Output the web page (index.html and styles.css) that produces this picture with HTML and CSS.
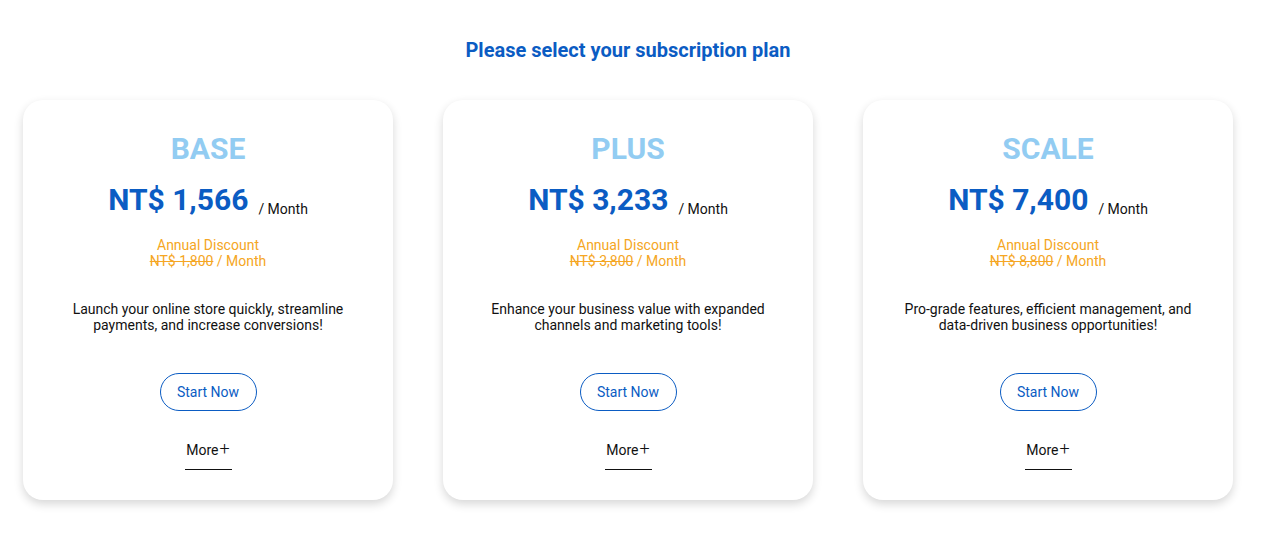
FILE: index.html
```html
<!DOCTYPE html>
<html lang="en">
<head>
<meta charset="utf-8">
<title>Subscription plans</title>
<link rel="stylesheet" href="styles.css">
</head>
<body>
<main class="page">
  <h1 class="heading">Please select your subscription plan</h1>
  <div class="plans">
    <section class="card">
      <h2 class="plan-name">BASE</h2>
      <div class="price"><span class="amount">NT$ 1,566</span><span class="per">/ Month</span></div>
      <div class="discount">
        <div>Annual Discount</div>
        <div><s>NT$ 1,800</s> / Month</div>
      </div>
      <p class="desc">Launch your online store quickly, streamline payments, and increase conversions!</p>
      <button class="start">Start Now</button>
      <a class="more">More<span class="plus">+</span></a>
    </section>
    <section class="card">
      <h2 class="plan-name">PLUS</h2>
      <div class="price"><span class="amount">NT$ 3,233</span><span class="per">/ Month</span></div>
      <div class="discount">
        <div>Annual Discount</div>
        <div><s>NT$ 3,800</s> / Month</div>
      </div>
      <p class="desc">Enhance your business value with expanded channels and marketing tools!</p>
      <button class="start">Start Now</button>
      <a class="more">More<span class="plus">+</span></a>
    </section>
    <section class="card">
      <h2 class="plan-name">SCALE</h2>
      <div class="price"><span class="amount">NT$ 7,400</span><span class="per">/ Month</span></div>
      <div class="discount">
        <div>Annual Discount</div>
        <div><s>NT$ 8,800</s> / Month</div>
      </div>
      <p class="desc">Pro-grade features, efficient management, and data-driven business opportunities!</p>
      <button class="start">Start Now</button>
      <a class="more">More<span class="plus">+</span></a>
    </section>
  </div>
</main>
</body>
</html>
```
FILE: styles.css
```css
* { box-sizing: border-box; }
html, body { margin: 0; padding: 0; background: #fff; }
body { font-family: Roboto, "Noto Sans", Arial, sans-serif; color: #111; }
.page { width: 1210px; margin-left: 23px; padding-top: 37px; padding-bottom: 40px; }
.heading {
  margin: 0;
  text-align: center;
  font-size: 20px;
  line-height: 26px;
  font-weight: 700;
  color: #0b5cc3;
}
.plans {
  display: flex;
  gap: 50px;
  margin-top: 37px;
}
.card {
  width: 370px;
  height: 400px;
  background: #fff;
  border-radius: 20px;
  box-shadow: 0 4px 10px rgba(0,0,0,0.16);
  display: flex;
  flex-direction: column;
  align-items: center;
  padding-top: 31px;
}
.plan-name {
  margin: 0;
  font-size: 30px;
  line-height: 36px;
  font-weight: 700;
  color: #92ccf2;
}
.price {
  margin-top: 14px;
  display: flex;
  align-items: baseline;
  gap: 10px;
}
.amount {
  font-size: 30px;
  line-height: 38px;
  font-weight: 700;
  color: #0b5cc3;
}
.per { font-size: 14px; color: #111; position: relative; top: 4px; }
.discount {
  margin-top: 18px;
  text-align: center;
  font-size: 14px;
  line-height: 16px;
  color: #f5a623;
}
.discount s { text-decoration-thickness: 1px; }
.desc {
  margin: 32px 0 0;
  width: 294px;
  text-align: center;
  font-size: 14px;
  line-height: 16px;
  color: #111;
}
.start {
  margin-top: 40px;
  width: 97px;
  height: 38px;
  border: 1px solid #0b5cc3;
  border-radius: 19px;
  background: #fff;
  color: #0b5cc3;
  font-family: inherit;
  font-size: 14px;
  padding: 0;
}
.more {
  margin-top: 29px;
  font-size: 14px;
  line-height: 18px;
  color: #111;
  padding-bottom: 10px;
  border-bottom: 1px solid #111;
  width: 47px;
  text-align: center;
}
.plus { font-size: 18px; font-weight: 300; margin-left: 1px; }
```
